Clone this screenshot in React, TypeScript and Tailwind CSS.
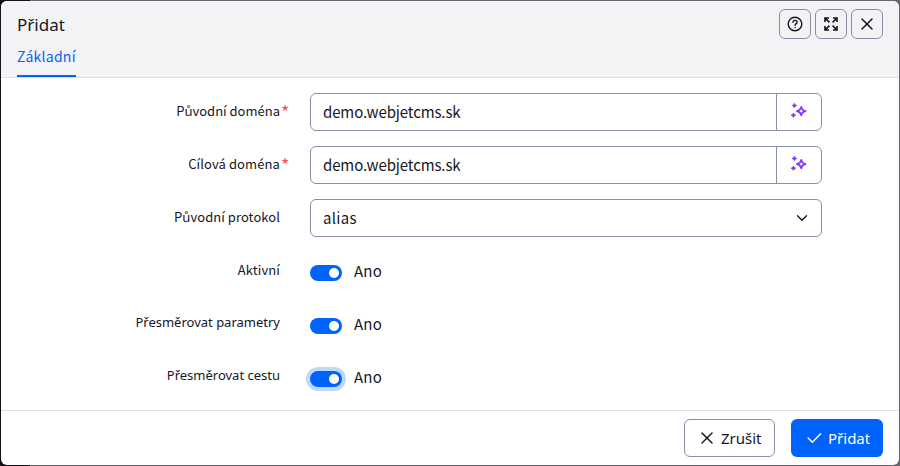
import type { ReactNode } from "react";
import { TbCheck, TbChevronDown, TbX } from "react-icons/tb";

function Sparkles() {
  return (
    <svg width="18" height="18" viewBox="0 0 18 18" className="text-[#8338f5]">
      <path
        d="M11.3 4.9C11.7 7.5 12.7 8.6 15.5 9.1C12.7 9.6 11.7 10.7 11.3 13.3C10.7 10.7 9.7 9.6 6.9 9.1C9.7 8.6 10.7 7.5 11.3 4.9Z"
        fill="none"
        stroke="currentColor"
        strokeWidth="1.8"
        strokeLinejoin="round"
      />
      <path
        d="M4.4 1.4L5.2 2.9L6.6 3.5L5.2 4.2L4.4 5.6L3.7 4.2L2.2 3.5L3.7 2.9ZM3.4 11.1L4.2 12.5L5.6 13.2L4.2 13.9L3.4 15.3L2.7 13.9L1.2 13.2L2.7 12.5Z"
        fill="currentColor"
        stroke="currentColor"
        strokeWidth="1"
        strokeLinejoin="round"
      />
    </svg>
  );
}

function HelpIcon() {
  return (
    <svg width="16" height="16" viewBox="0 0 16 16" fill="none" stroke="currentColor" strokeWidth="1.4" strokeLinecap="round">
      <circle cx="8" cy="8" r="6.8" />
      <path d="M6 6.3C6.1 5 7 4.4 8.1 4.4C9.3 4.4 10.1 5.2 10.1 6.2C10.1 7.6 8.1 7.6 8.1 9.2M8.1 11.5V11.6" />
    </svg>
  );
}

function ExpandIcon() {
  return (
    <svg width="16" height="16" viewBox="0 0 16 16" fill="none" stroke="currentColor" strokeWidth="1.65">
      <path d="M2 6V2H6M2 2L6.4 6.4M10 2H14V6M14 2L9.6 6.4M2 10V14H6M2 14L6.4 9.6M10 14H14V10M14 14L9.6 9.6" />
    </svg>
  );
}

function Row({ label, required, className, labelClass, children }: {
  label: string; required?: boolean; className: string; labelClass: string; children: ReactNode;
}) {
  return (
    <div className="flex h-[53px] items-start">
      <div className={`flex w-[288px] shrink-0 justify-end pt-[9px] text-[13px] leading-[18px] ${labelClass}`}>
        <span className={`whitespace-nowrap ${className}`}>{label}</span>
        <span className="w-[9px] pl-px font-['Noto_Sans_CJK_SC','Noto_Sans',sans-serif] text-[18px] leading-[18px] text-[#ff4b58]">{required ? "*" : ""}</span>
      </div>
      <div className="ml-[21px] w-[512px]">{children}</div>
    </div>
  );
}

function DomainField() {
  return (
    <div className="flex h-[38px] rounded-md border border-[#868ea8] bg-white">
      <div className="flex-1 pl-3 font-['Noto_Sans_CJK_SC','Noto_Sans',sans-serif] text-[15px] leading-[35px] tracking-[-0.12px]">demo.webjetcms.sk</div>
      <button className="flex w-[45px] items-start justify-center border-l border-[#868ea8] pt-2">
        <Sparkles />
      </button>
    </div>
  );
}

function Toggle({ focused }: { focused?: boolean }) {
  return (
    <div className="flex h-[38px] items-center pt-[1px]">
      <div className={`mt-[2px] flex h-4 w-8 items-center justify-end rounded-full bg-[#0063fb] pr-[3px] ${focused ? "ring-4 ring-[#bfd8fe]" : ""}`}>
        <span className="size-[10px] rounded-full bg-white" />
      </div>
      <span className="-mt-[2px] ml-3 font-['Noto_Sans_CJK_SC','Noto_Sans',sans-serif] text-[15px] leading-6 tracking-[0.2px]">Ano</span>
    </div>
  );
}

function HeaderButton({ children }: { children: ReactNode }) {
  return (
    <button className="flex h-[30px] w-8 items-center justify-center rounded-md border border-[#868ea8]">{children}</button>
  );
}

export default function App() {
  return (
    <div className="h-[466px] w-[900px] overflow-hidden bg-[linear-gradient(90deg,#13111b_30px,#69676b_30px)] p-px font-['Noto_Sans','Open_Sans',sans-serif] text-[#15171f]">
      <div className="flex h-[464px] w-[898px] flex-col overflow-hidden rounded-md bg-white">
        <header className="flex h-[77px] shrink-0 justify-between border-b border-[#dddfe4] bg-[#f3f3f6] pr-[16px] pl-4">
          <div className="flex flex-col items-start">
            <h1 className="mt-[11px] text-[17px] leading-[26px]">Přidat</h1>
            <button className="mt-[6px] h-[33px] border-b-2 border-[#0063fb] pb-[7px] font-['Noto_Sans_CJK_SC','Noto_Sans',sans-serif] text-[14px] leading-[24px] text-[#0063fb]">
              <span className="block w-[59px] whitespace-nowrap text-left tracking-[0.25px]">Základní</span>
            </button>
          </div>
          <div className="flex gap-1 pt-2">
            <HeaderButton><HelpIcon /></HeaderButton>
            <HeaderButton><ExpandIcon /></HeaderButton>
            <HeaderButton><TbX size={20} strokeWidth={1.8} /></HeaderButton>
          </div>
        </header>
        <main className="min-h-0 flex-1 pt-[15px]">
          <Row label="Původní doména" required className="font-['Noto_Sans_CJK_SC','Noto_Sans',sans-serif]" labelClass=""><DomainField /></Row>
          <Row label="Cílová doména" required className="font-['Noto_Sans_CJK_SC','Noto_Sans',sans-serif] tracking-[0.1px]" labelClass=""><DomainField /></Row>
          <Row label="Původní protokol" className="font-['Noto_Sans_CJK_SC','Noto_Sans',sans-serif] tracking-[0.06px]" labelClass="">
            <div className="flex h-[38px] items-center justify-between rounded-md border border-[#868ea8] pr-[10px] pl-3">
              <span className="font-['Noto_Sans_CJK_SC','Noto_Sans',sans-serif] text-[15px] leading-[36px] tracking-[0.3px]">alias</span>
              <TbChevronDown size={18} strokeWidth={1.8} />
            </div>
          </Row>
          <Row label="Aktivní" className="font-['Noto_Sans_CJK_SC','Noto_Sans',sans-serif] tracking-[0.1px]" labelClass=""><Toggle /></Row>
          <Row label="Přesměrovat parametry" className="" labelClass="-mt-px"><Toggle /></Row>
          <Row label="Přesměrovat cestu" className="" labelClass="-mt-px"><Toggle focused /></Row>
        </main>
        <footer className="flex h-[55px] shrink-0 items-start justify-end gap-4 border-t border-[#dddfe4] pt-2 pr-4 text-[15px]">
          <button className="flex h-[38px] w-[91px] items-center rounded-md border border-[#868ea8] pl-3">
            <TbX size={20} strokeWidth={1.8} /><span className="ml-1 whitespace-nowrap">Zrušit</span>
          </button>
          <button className="flex h-[38px] w-[92px] items-center rounded-md bg-[#0063fb] pl-[13px] text-white">
            <TbCheck size={20} strokeWidth={1.8} /><span className="ml-1 whitespace-nowrap">Přidat</span>
          </button>
        </footer>
      </div>
    </div>
  );
}
